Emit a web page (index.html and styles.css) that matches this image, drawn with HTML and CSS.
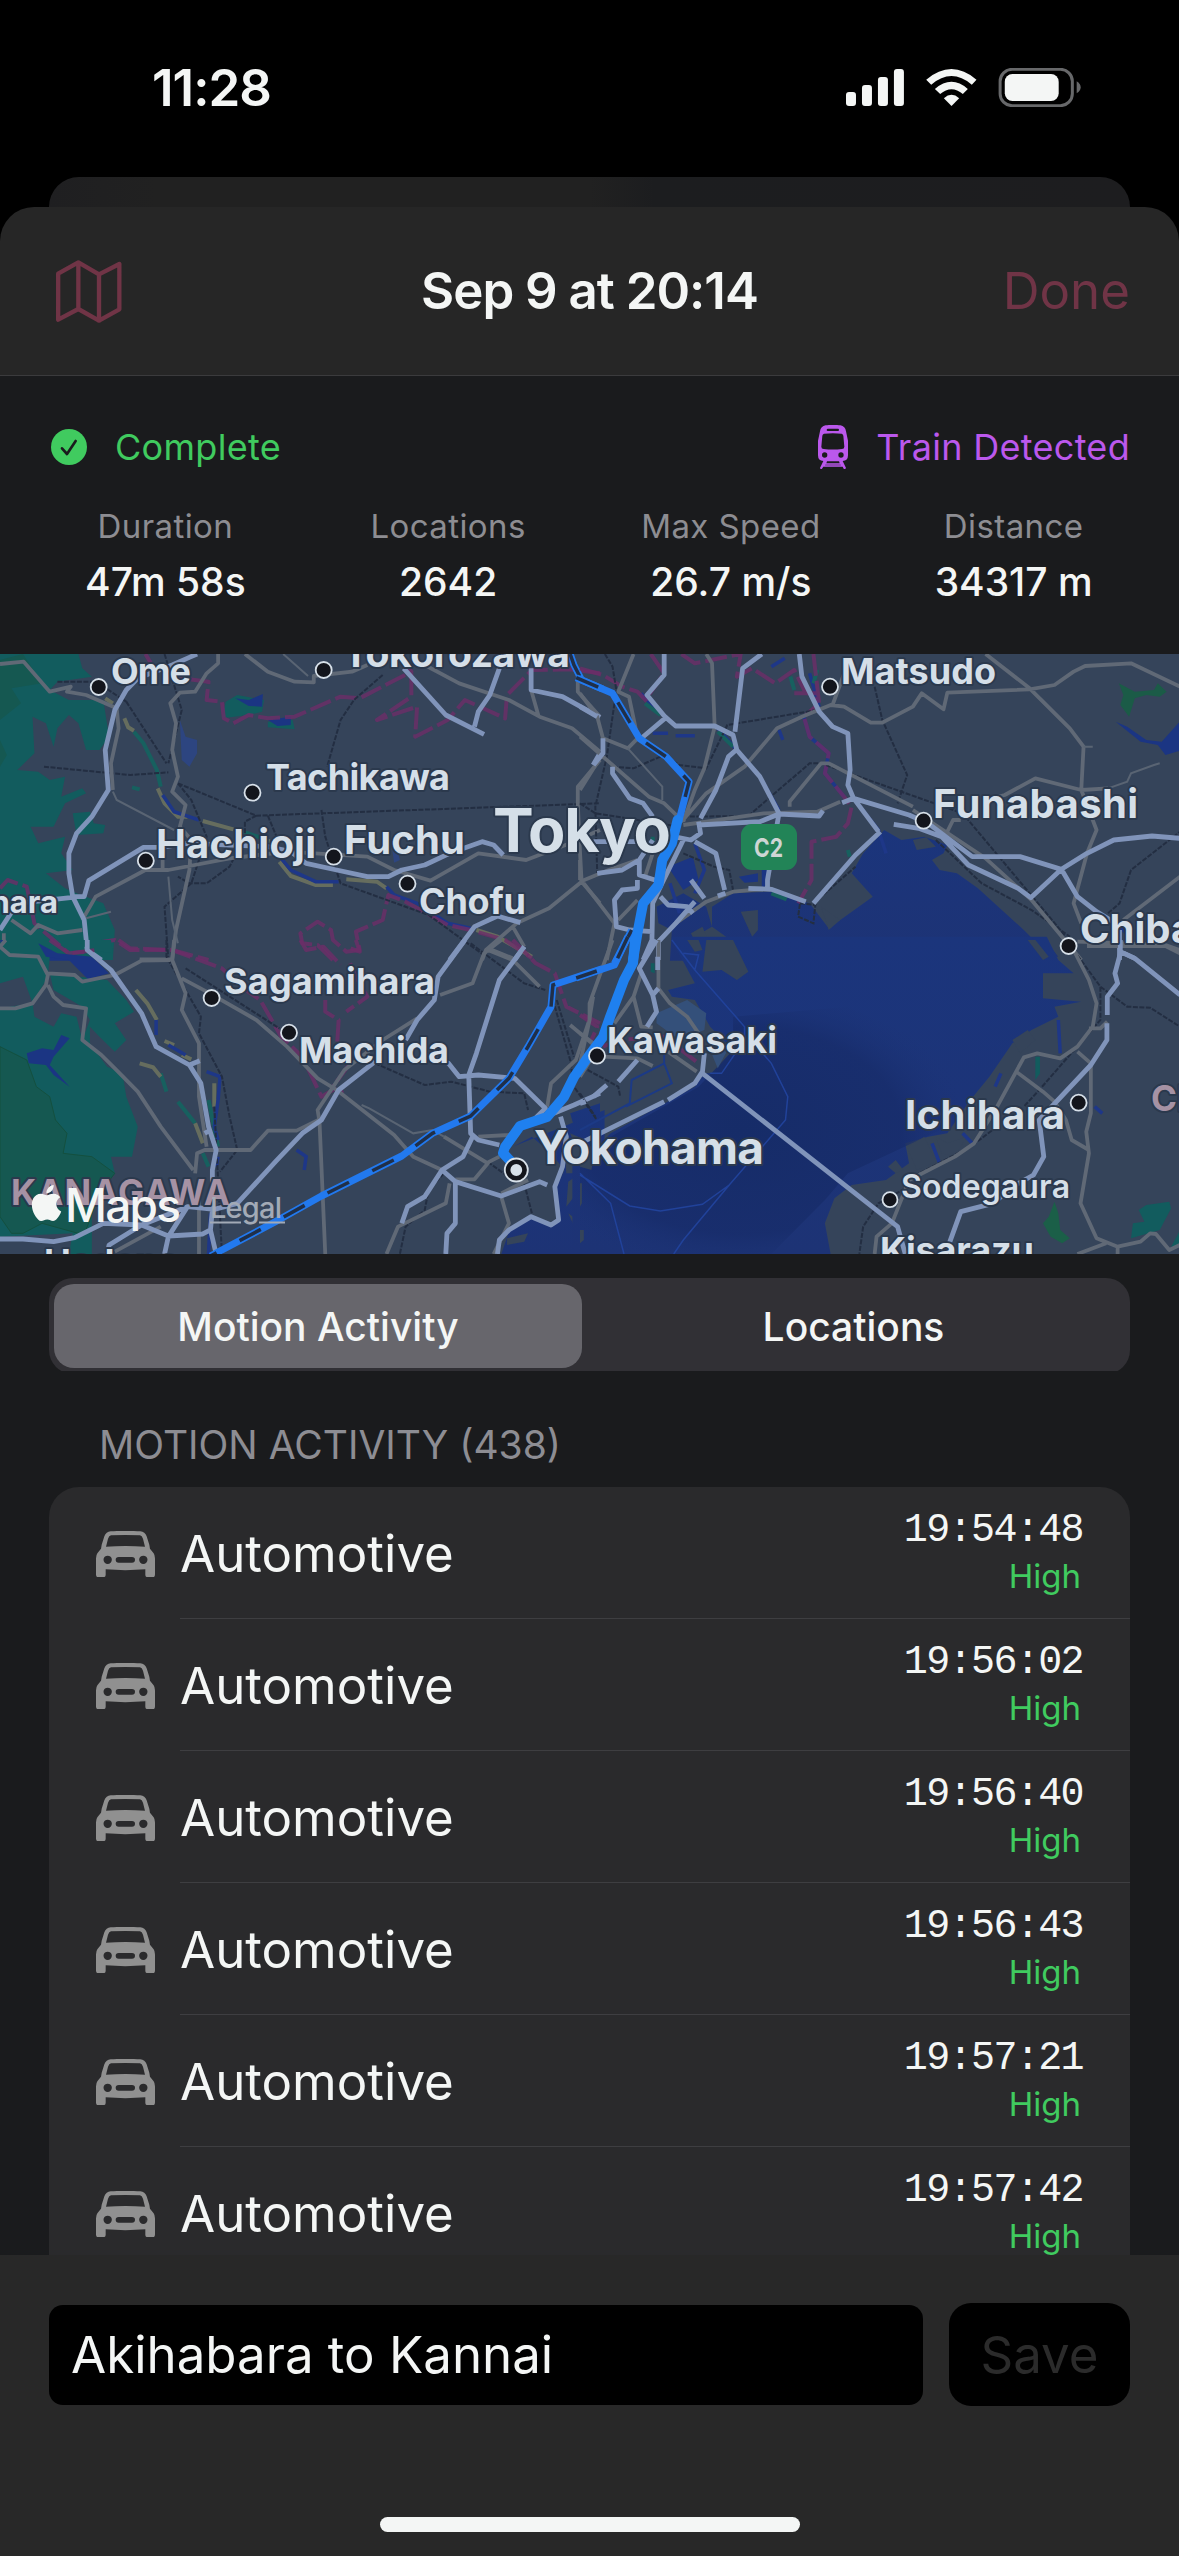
FILE: index.html
```html
<!DOCTYPE html>
<html lang="en">
<head>
<meta charset="utf-8">
<title>Sep 9 at 20:14</title>
<link rel="stylesheet" href="styles.css">
</head>
<body>
<svg class="defs" width="0" height="0" aria-hidden="true">
  <symbol id="car" viewBox="108 152 177 139">
    <path fill-rule="evenodd" d="M152 153Q196 150 241 153Q255 155 260 168L268 193L270 205L281 219Q285 225 285 234V283Q285 291 277 291H264Q256 291 256 283V267Q196 272 137 267V283Q137 291 129 291H116Q108 291 108 283V234Q108 225 112 219L123 205L125 193L133 168Q138 155 152 153ZM153 165Q147 166 144 175L138 199Q196 195 255 199L249 175Q246 166 240 165Q196 163 153 165ZM143 226A12.500 12.500 0 1 0 143 251A12.500 12.500 0 1 0 143 226ZM250 226A12.500 12.500 0 1 0 250 251A12.500 12.500 0 1 0 250 226ZM176 230Q167 230 167 238Q167 247 176 247H216Q225 247 225 238Q225 230 216 230Z"/>
  </symbol>
</svg>

<div class="status">
  <span class="clock">11:28</span>
  <svg class="status-icons" viewBox="48 54 706 118">
    <g fill="#f4f6f5">
      <rect x="48" y="126" width="30" height="42" rx="9"/><rect x="96" y="105" width="30" height="63" rx="9"/>
      <rect x="144" y="81" width="30" height="87" rx="9"/><rect x="192" y="57" width="30" height="111" rx="9"/>
      <path d="M289 89Q365 25 440 89L426 104Q365 52 304 104Z"/>
      <path d="M315 117Q365 74 414 117L399 132Q365 103 331 132Z"/>
      <path d="M342 145Q365 124 388 145L365 168Z"/>
      <rect x="525" y="72" width="162" height="81" rx="23"/>
    </g>
    <rect x="511" y="58" width="217" height="109" rx="36" fill="none" stroke="#67686a" stroke-width="9"/>
    <path fill="#67686a" d="M741 94Q753 101 753 112Q753 123 741 130Z"/>
  </svg>
</div>
<div class="sheet-behind"></div>

<main class="sheet">
  <header class="nav">
    <svg class="map-icon" viewBox="48 60 197 189"><path fill="none" stroke="#703446" stroke-width="13" stroke-linejoin="round" stroke-linecap="round" d="M54.500 101L115 67L177 103L238 72V208L177 242L115 207L54.500 239ZM115 67V207M177 103V242"/></svg>
    <h1>Sep 9 at 20:14</h1>
    <span class="done">Done</span>
  </header>

  <section class="details">
    <div class="badges">
      <div class="badge complete">
        <svg class="check" viewBox="33 563 108 108"><circle cx="87" cy="617" r="54" fill="#40cb5f"/><path d="M66 621L81 638L107 599" fill="none" stroke="#1a1b1d" stroke-width="8" stroke-linecap="round" stroke-linejoin="round"/></svg>
        <span>Complete</span>
      </div>
      <div class="badge train">
        <svg class="train-icon" viewBox="69 45 90 132"><path fill="#bb58ec" fill-rule="evenodd" d="M92 46Q114 43 136 46Q151 49 153 64L159 92V136Q159 153 143 153L153 174Q150 179 146 176L143 170H85L81 176Q77 179 75 174L85 153Q69 153 69 136V92L75 64Q77 49 92 46ZM98 56Q95 57 95 60Q95 63 98 63H129Q132 63 132 60Q132 56 129 56ZM87 71Q83 72 82 77L79 110Q79 117 86 117Q114 120 141 117Q148 117 148 110L145 77Q144 72 140 71Q114 68 87 71ZM89 127A8 8 0 1 0 89 143A8 8 0 1 0 89 127ZM138 127A8 8 0 1 0 138 143A8 8 0 1 0 138 127ZM96 154L94 160H134L132 154ZM91 164L90 166H138L137 164Z"/></svg>
        <span>Train Detected</span>
      </div>
    </div>
    <dl class="stats">
      <div><dt>Duration</dt><dd>47m 58s</dd></div>
      <div><dt>Locations</dt><dd>2642</dd></div>
      <div><dt>Max Speed</dt><dd>26.7 m/s</dd></div>
      <div><dt>Distance</dt><dd>34317 m</dd></div>
    </dl>
  </section>

  <svg class="map" viewBox="0 0 1179 600">
    <defs>
      <linearGradient id="bay" x1="0" y1="0" x2="0" y2="1"><stop offset="0" stop-color="#1b357c"/><stop offset="1" stop-color="#1d3375"/></linearGradient>
      <radialGradient id="deep" cx=".42" cy=".5" r=".6"><stop offset="0" stop-color="#162c68"/><stop offset=".7" stop-color="#172c6a" stop-opacity=".75"/><stop offset="1" stop-color="#1c3478" stop-opacity="0"/></radialGradient>
    </defs>
    <!-- north-west quarter -->
    <g transform="translate(0 -14) scale(.38265 .33333)">
      <path class="forest" d="M0 42H205L215 85 240 110 150 125 130 150 180 180 270 180 285 290 260 330 225 330 205 250 180 225 150 265 140 320 120 250 85 230 90 340 45 390 100 395 130 420 170 410 160 470 215 445 225 460 170 490 140 560 80 560 100 610 170 590 160 640 190 690 120 700 170 745 200 760 270 790 300 870 295 960H0ZM190 520L235 515 245 550 275 555 270 580 200 585ZM590 185L620 165 690 180 685 215 650 225 580 235ZM700 245L765 240 770 268 700 262Z"/>
      <path class="wood" d="M0 60L60 42 110 130 30 145 55 190 0 240ZM0 300L18 345 0 380Z"/>
      <path class="lake" d="M615 175L650 180 687 162 685 200 650 198ZM700 240L760 230 760 255 725 258ZM100 910L150 945 230 955 220 962H130Z"/>
      <path fill="#2d4580" d="M470 240L485 290 515 300 515 340 495 380 475 360ZM1025 630L1040 635 1045 660 1030 668Z"/>
      <path class="stream teal" d="M350 275L375 310 410 390 420 440M635 575L700 600M345 442L365 448"/>
      <path class="stream sand" d="M325 235L335 262 350 272M412 445L430 490 465 530 490 530M530 543L610 568M730 665L760 708 825 735 870 735M905 718L985 725 1010 745M1245 870L1300 890 1390 950M275 175L295 190M680 598L705 604"/>
      <path class="stream water" d="M425 465L455 515 520 540M735 655L760 690 825 725 885 725M1010 740L1030 765 1090 790 1170 850 1230 865"/>
      <path class="border" d="M380 42L400 80 440 110 545 125 540 180 580 185 585 235 610 250 650 225 700 235 770 230 890 170 940 175 1075 95 1060 65M1075 100V170L985 240 1090 200 1085 290 1170 240 1215 180 1320 235 1325 165 1390 90 1490 88 1568 100M0 745L20 720 70 740 90 850 180 940 230 935M245 910L300 900 340 930 450 930 545 960M870 960L830 915 790 910 785 880 830 845 865 870 870 900 905 935 940 930 930 875 1000 840 1015 765 1060 785 1170 855 1230 870 1320 900 1390 955"/>
      <path class="rail" d="M115 380L340 405 440 397M330 185L435 370M430 42L475 210 440 370M465 430L670 527 840 520 1568 490M465 430L500 480 540 590 500 730 430 800 440 960M1000 105L925 180 890 240 855 380M700 527L730 610M840 510L850 590 890 730 1120 825 1270 950M670 527L640 545 640 590 600 680 540 730 495 730 465 710M150 125H250L330 185"/>
      <path class="minor" d="M640 42L700 95 770 125 820 127 820 108 920 95 960 75M570 42V70L540 100 510 155 470 158 445 190 460 250 450 330 465 410 450 455 485 495 470 560 500 600 495 690 460 870 450 960M0 72L62 65 130 155 185 140 175 155 225 165 305 205 310 265 290 370 295 450M1110 75L1200 130 1330 180 1410 230 1495 265 1568 335M1388 150L1408 230M1510 85V155L1568 230M215 840L250 770 380 690 440 690 600 655 750 635 960 650 1030 690 1125 722 1250 640 1375 660 1490 610 1568 570M30 840L80 880 100 855 150 880 215 870M10 880V910L30 945 100 950M1568 360L1510 440V490L1515 620 1520 725 1568 790M1520 725L1435 805 1350 850 1270 930 1260 960M1340 860L1370 920M1275 925L1340 955M365 958H450M425 690V650"/>
      <path class="thin" d="M295 455L305 480 455 570M440 710L450 840 465 910M225 835L290 815M740 42L805 108"/>
      <path class="major" d="M515 42L495 52 450 75 360 115 330 150 300 210 275 330 283 450 240 530 200 580 180 640 180 700 190 770 220 840 228 930 265 960M190 770L220 770 232 722 375 622 420 622 490 610 700 620 760 635 800 670 880 690 960 710 1015 710 1050 690 1110 675 1175 640 1260 605 1290 615 1315 645M1055 85L1165 225 1265 283M1305 85L1280 165 1250 215 1240 260M1388 85V150L1470 170 1568 232M1175 960L1240 860 1300 828 1360 848M1370 920L1345 960M1568 340L1550 375M0 870L45 790 190 772"/>
      <path class="train-line" d="M1490 42L1500 75 1520 120 1575 147"/><path class="train-dash" d="M1490 42L1500 75 1520 120 1575 147"/>
    </g>
    <!-- north-east quarter -->
    <g transform="translate(580 -14) scale(.38265 .33333)">
      <path fill="url(#bay)" d="M795 570L840 600 900 590 960 615 950 640 920 660 940 690 985 700 1040 745 1160 870 1240 962H425L400 905 345 860 345 800 400 760 500 755 600 790 650 865 765 770 710 700 740 640ZM200 800L270 760 330 800 345 860 300 890 350 962H235L240 870 205 850ZM1190 900L1210 890 1250 950H1215Z"/>
      <path class="lake" d="M1400 245L1430 260 1480 300 1520 305 1575 235V330L1530 345 1510 315 1465 305ZM415 710L465 700 465 725 430 728ZM475 690H495V740H475ZM230 680L295 650 310 720 270 750Z"/>
      <path class="land" d="M420 815L465 810 465 870 450 890ZM290 880L320 860 335 900 310 930ZM365 930L400 905 415 940 370 962ZM870 600L905 592 930 620 880 630ZM630 800L680 840 650 870Z"/>
      <path class="stream water" d="M500 80L535 55M190 280H230M250 287H300M520 270L530 300M360 265L410 330 470 410 520 510M160 160L200 215M725 490L780 570 800 640M300 610L325 690 300 760M235 730L260 820M600 100L625 200M585 230L600 290 650 340 640 400 690 470M1400 840L1440 900"/>
      <path class="stream teal" d="M550 110L560 150M620 90L610 130M170 190L210 225M360 275L400 320M700 630L705 650M500 760L540 778M190 590V605"/>
      <path fill="#1b5b47" d="M1408 130L1450 155 1500 150 1510 130 1533 155 1515 170 1480 165 1450 175 1435 230 1412 195 1420 165Z"/>
      <path class="border" d="M0 85L60 105 110 140 150 155 175 185M185 42L220 100 180 165M265 42L300 70 420 42 410 110 450 85 510 130 560 90 590 160M560 160H620L615 200 585 230 600 290 650 340 640 400 690 470 710 500 700 550 670 590 605 605 605 720 570 790M610 42L625 190"/>
      <path class="rail" d="M65 42L85 80 95 150 70 350 40 500 45 700M85 380L140 385 220 345 260 375 330 385 385 255 620 210M770 140L790 240 855 405 830 490M270 530L440 528 600 370 630 370 1000 520 1270 890M930 600L1050 730 1180 810 1280 890M1380 820L1410 790 1440 690 1568 575M270 640L350 680 390 690 400 750M575 790L615 795 610 850 570 830ZM0 490L40 520 260 560M610 790L720 680"/>
      <path class="minor" d="M140 42L100 155 128 170 150 290M0 290L180 470 220 490 265 540M330 42L345 70 352 260 325 385 300 450 270 545M0 450L60 340M60 295L125 325 155 290M700 70L660 195M270 555L480 520 620 515 680 485M548 500V485L630 370 650 370 870 500M265 545L330 460 430 380 515 265 580 230 655 195 690 200 760 248H790L870 200 893 160 950 208 960 158 1175 148 1240 135 1290 95 1320 78 1440 70 1568 140M1060 42L1175 145 1280 265 1316 320 1310 450 1350 570 1325 640 1290 790 1310 850M1060 480L1110 465 1190 415 1310 450 1380 445M870 510L1060 655 1180 780 1310 960M960 575L975 540 995 540M1420 840L1568 710M1300 905L1530 915 1568 930M0 725L75 690 150 660M0 720V660M10 730L90 850 70 960M150 780L100 840M170 710L190 640 250 590M0 160L45 230 60 295M150 880L130 960M200 910L250 850 330 785 400 755 500 745"/>
      <path class="thin" d="M1380 445L1430 425 1440 400 1500 375 1515 370M1316 320H1340M125 325L215 440V480"/>
      <path class="major" d="M220 42V105L175 165 222 230 250 258H352L400 285 410 330 470 410 520 520 490 720V745M475 42L425 85 405 275M408 330L388 350 355 450 315 535M222 235L155 300M573 42L580 110 625 215 660 260 700 280 706 390 700 435 715 475 860 525 910 550 1025 650H1150L1258 688 1325 640 1395 600 1495 588 1568 595M310 555L470 545 520 522 625 528 635 512M685 488L715 475 780 575M820 553L885 565 945 590 1015 675 1145 745 1178 773 1258 688 1300 770 1350 815 1400 850M785 575L720 645 610 790M590 785L500 748 440 745M380 760L360 768M300 785L250 850 205 905V960M300 605L355 640 378 750M290 720L325 775M245 590L290 600 315 580 310 545M0 200L45 230M60 295V340L35 375M85 380V400L130 475 165 490 190 530M45 700L110 690 155 660 190 600M155 660V705L210 725M270 600L210 740 190 790 188 900 165 960M210 770L230 795 280 800 295 820M150 720V745L110 750 90 780 95 860 130 870 188 875M35 605H150M1410 870V960M1412 935L1450 955"/>
      <path class="train-line" d="M-10 113L85 160 155 295 225 350 285 425 258 545M135 870L90 970"/><path class="train-dash" d="M-10 113L85 160 155 295 225 350 285 425 258 545M135 870L90 970"/>
      <path class="track" d="M255 540L240 610 215 660 205 735 165 790 150 880 138 965"/>
    </g>
    <!-- south-west quarter -->
    <g transform="translate(0 286) scale(.38265 .33333)">
      <path class="forest" d="M0 0H100L130 50 125 110 85 190 90 230 140 260 160 220 200 230 215 300 235 240 215 200 140 150 130 100 280 120 330 180 350 215 300 250 330 300 300 335 260 290 235 260 235 310 280 380 320 400 330 470 360 560 345 650 290 650 300 700 240 800 240 942H180L190 880 0 890V205L85 190 60 110 0 130ZM200 0H290L295 40 230 30Z"/>
      <path class="wood" stroke="#14503f" d="M0 320L70 360 95 440 130 470 145 540 175 580 165 640 240 650 300 700 260 760 220 885 110 850 60 880H30L0 830Z"/>
      <path class="lake" d="M100 10L150 40 240 50 285 100 230 118 180 60 120 50ZM70 340L110 325 140 330 160 285 182 295 140 350 130 375 182 440 140 405 120 375 75 370ZM0 0H10L5 20Z"/>
      <path fill="url(#bay)" d="M1568 490L1490 520 1500 560 1568 540ZM1340 620L1390 590 1440 640 1475 690 1455 740 1465 840 1440 858 1388 832 1330 875 1310 942H1580V700H1480L1470 560 1500 620 1580 640V510"/>
      <path class="land" d="M1485 725L1510 705 1500 770 1480 800ZM1485 820L1520 850 1525 900 1500 930 1505 870ZM1540 700L1580 690V720L1545 735ZM1325 895L1380 880 1370 905 1325 915ZM1490 580L1530 600 1510 640Z"/>
      <path class="stream teal" d="M420 400L435 455M465 485L510 550M530 640L545 680M545 480L570 620"/>
      <path class="stream sand" d="M355 150L385 190 410 240M430 303L455 315M365 370L400 382 420 410M510 550L530 610M560 430V500M475 345L500 358"/>
      <path class="stream water" d="M408 240V285M440 315L485 345M540 395L575 410 570 480 560 560 570 600M570 650L565 680M550 820L545 942M775 630L800 650 795 690"/>
      <path class="border" d="M130 0L180 40 250 30M310 0L340 25 450 30 580 85 630 140 680 180 735 290 790 350 840 470 885 440 895 460M785 0L800 30 845 20 890 75M930 0L940 35 905 20M915 70L930 110 960 170 905 215M850 180V215L885 240 880 330M915 370L870 440M1340 0L1400 70 1450 100 1480 200 1568 250"/>
      <path class="rail" d="M435 0V50L525 230 520 280 580 410 600 530 620 630 575 695M485 85L730 265M980 370L1110 435 1180 425 1280 455 1370 460 1380 510M1230 10L1370 130 1425 150M1445 180L1490 360 1500 440 1560 540M1340 720L1280 670M1160 700L1120 750 1110 810 1060 860 1045 942M1370 730L1390 820M560 500L580 942M1455 180L1500 350"/>
      <path class="minor" d="M15 0L0 20 25 45 100 50 125 105 120 135 85 190 40 205H0M125 100L195 105 215 125 300 105 370 62 445 60M125 135L140 170 165 195 225 205 215 300 265 345 300 385 360 455 420 560 505 690M455 0L450 60 485 160 475 210 520 310 520 470 540 620M475 115L540 155 670 240 750 320 830 415 880 450 930 495 1030 585 1080 650 1155 690M1310 0L1265 40 1235 130 1150 165M1275 30L1340 60 1410 140M1090 235L1000 300 900 390 830 510 835 545 850 942M520 942V780M510 700L515 640 535 630H655L700 572H775L840 535M1310 770L1330 850 1290 942M1175 730L1165 790 1040 860 1010 942M1250 590L1330 585 1370 560M1160 590L1275 670 1240 718 1190 718M1550 170L1540 240 1505 360 1440 430 1430 500M1490 255L1568 330M420 860L300 935M1310 760L1380 720M1270 670L1305 650"/>
      <path class="thin" d="M945 495L965 505 1080 580 1130 570 1160 590"/>
      <path class="major" d="M228 0V30L290 90 370 220 408 320 495 375 525 430 545 560 565 630 555 690 555 810 550 870 565 942M495 375L522 362M535 580L550 570M1215 0L1145 110 1135 180 1090 240 1060 300M980 365L885 450 840 540 790 580 720 665 620 790 560 808 490 800 440 890 430 942M0 897H60L140 905 195 893 270 850 370 855 440 888 530 882 550 870M370 855L285 915 280 942M370 855L490 800M1370 20L1305 120 1245 340 1225 405 1230 580 1250 600 1305 615M1100 340L1172 370 1200 410 1250 405 1345 415 1425 505 1390 545M1425 530L1500 495 1568 460M1235 590L1210 650 1155 690 1110 770 1065 800 1050 850M1155 690L1190 725 1310 768 1410 725 1430 735M1190 725V850L1168 880 1165 942M1465 530L1480 590 1470 680 1450 740 1460 840 1440 855 1388 830 1330 870 1305 900 1300 942"/>
      <path class="train-line" d="M1575 86L1445 135 1440 200 1380 320 1330 415 1230 528 1130 580 1050 648 840 768 720 845 550 948"/><path class="train-dash" d="M1575 86L1445 135 1440 200 1380 320 1330 415 1230 528 1130 580 1050 648 840 768 720 845 550 948"/>
    </g>
    <!-- south-east quarter -->
    <g transform="translate(580 286) scale(.38265 .33333)">
      <path fill="url(#bay)" d="M240 0L300 130 230 150 240 170 300 180 340 260 400 330 350 400 325 400 300 440 80 580 30 640 -20 660V942H655L640 850 665 775 710 735 800 720 860 670 850 610 910 590 960 580 1020 480 1070 410 1130 310 1180 270 1250 230 1240 200 1310 185 1210 175V100L1290 100 1250 60 1220 -10H240Z"/>
      <path fill="url(#deep)" d="M400 230L700 200 950 330 1000 450 960 560 700 700 640 780 500 942H0V660L80 590 310 440 400 330Z"/>
      <path class="land" d="M330 0H400L440 95 410 120 370 90 320 95ZM280 0H310L320 30 300 35ZM1130 300L1170 270 1190 300 1150 340ZM930 590L960 610 1010 590 980 650 945 640ZM1170 0H1190L1225 50 1210 60ZM855 620L900 590 930 665 880 690ZM805 680L825 660 845 690 825 700ZM0 640L40 610 30 690 0 680ZM0 730H5V790L0 800ZM0 870H10V900L0 910Z"/>
      <path fill="#34507a" d="M200 220L280 180 330 220 325 270 260 300 200 250ZM340 330L400 300 360 385Z"/>
      <path fill="none" stroke="#1c3a86" stroke-width="2" d="M0 570L130 490 135 420 220 370 240 430 120 500M220 370V330"/>
      <path fill="none" stroke="#21429a" stroke-width="1.500" d="M240 0L300 90 430 260V300L370 400H340M470 330L500 370 543 470 537 540 390 735 320 793 210 813 130 798 0 705M390 735L270 900 245 942M0 700L80 790 115 942M270 40L310 45 300 90"/>
      <path class="stream water" d="M1250 240L1255 340M1100 400L1085 440M1000 580L1025 610M920 610L940 670M1345 500L1365 520"/>
      <path fill="#1b5f48" d="M1240 785L1225 830 1210 850 1230 890 1260 910 1280 895 1255 870 1250 820Z"/>
      <path class="forest" d="M1480 795L1540 785 1545 805 1515 870 1440 895 1445 850 1475 845 1460 810ZM1190 350H1202V400L1190 420ZM1568 870V920H1545ZM185 70H195V100L185 95Z"/>
      <path class="border" d="M0 225L45 260 30 300M60 320L100 300 220 290 310 370"/>
      <path class="rail" d="M1290 30L1360 140 1430 200 1490 203 1568 260M1360 140V240L1200 450 1160 500M1090 560L1020 620 870 710M850 745L780 790 740 860 730 942M20 390L100 440 105 470M0 460L40 530"/>
      <path class="minor" d="M85 0L25 190V240L0 370M160 100L140 170 90 250M140 170L160 260 190 262M205 145L235 190 280 230 310 280M230 335L305 395M60 350L150 355 190 378M0 280L35 310M60 300L0 410M1290 30L1330 120 1350 190 1340 260 1300 320 1255 355 1195 340 1160 352 1090 500 1030 610 980 650 860 720 815 850 775 890 770 942M1140 395L1210 455 1240 485 1270 540 1285 600 1330 630M1300 335L1335 370V520L1323 575 1330 640 1308 790 1350 895 1405 920 1465 905 1490 880 1505 882 1540 930 1568 915M1375 910L1300 942M1405 920V942M1330 265H1360L1378 245M1325 18H1530L1568 40M205 0V150"/>
      <path class="major" d="M200 0L155 85 190 165 200 215 175 260M203 50V90M190 165L205 145M150 360L100 425M70 435L35 470M15 485L0 490M325 340L320 395 300 430 230 480M220 485L0 610M320 400L780 815 830 860 850 942M1412 0V40L1398 100 1405 130 1378 170V225M1377 250V300L1335 375 1200 540 1212 650 1185 705 1130 740 1080 790 995 815 965 910M1412 35L1450 55 1568 165"/>
      <path class="train-line" d="M125 -10L90 75 -10 114"/><path class="train-dash" d="M125 -10L90 75 -10 114"/>
    </g>
    <path class="track" d="M635 286L633 309 624 326 610 363 603 383 588 403 574 423 564 443 547 463 520 472 505 493 503 499 515 512"/>

    <g class="pins">
      <circle cx="98.700" cy="33" r="8"/><circle cx="323.700" cy="16" r="8"/><circle cx="252.500" cy="138.700" r="8"/><circle cx="145.800" cy="206.700" r="8"/><circle cx="333.700" cy="202.700" r="8"/><circle cx="407.500" cy="229.700" r="8"/><circle cx="830" cy="32.700" r="8"/><circle cx="923.600" cy="166.700" r="8"/><circle cx="1068.600" cy="292" r="8"/><circle cx="211.600" cy="344" r="8"/><circle cx="289" cy="378.700" r="8"/><circle cx="597" cy="401.700" r="8"/><circle cx="1078.600" cy="448.700" r="8"/><circle cx="890" cy="545.700" r="7.500"/>
      <circle cx="516.300" cy="516" r="11.500"/><circle cx="516.300" cy="516" r="5" class="pin-core"/>
    </g>
    <rect x="741" y="170" width="56" height="46" rx="11" fill="#228457"/>
    <text class="shield" x="754" y="203" textLength="29" lengthAdjust="spacingAndGlyphs">C2</text>
    <g class="places">
      <text x="111" y="30" textLength="80">Ome</text>
      <text x="343" y="13" font-size="39" textLength="227">Tokorozawa</text>
      <text x="266" y="136" textLength="184">Tachikawa</text>
      <text x="156" y="204" font-size="40" textLength="160">Hachioji</text>
      <text x="344" y="200" font-size="40" textLength="121">Fuchu</text>
      <text x="419" y="260" textLength="107">Chofu</text>
      <text x="58" y="259" font-size="31" text-anchor="end">Uenohara</text>
      <text x="493" y="198" font-size="61" textLength="178">Tokyo</text>
      <text x="841" y="30" textLength="155">Matsudo</text>
      <text x="933" y="164" font-size="40" textLength="205">Funabashi</text>
      <text x="1080" y="289" font-size="40">Chiba</text>
      <text x="224" y="340" textLength="211">Sagamihara</text>
      <text x="299" y="409" textLength="150">Machida</text>
      <text x="607" y="399" textLength="170">Kawasaki</text>
      <text x="534" y="510" font-size="46" textLength="230">Yokohama</text>
      <text x="905" y="475" font-size="40" textLength="160">Ichihara</text>
      <text x="901" y="544" font-size="32" class="semi" textLength="169">Sodegaura</text>
      <text x="880" y="609" textLength="154">Kisarazu</text>
      <text x="44" y="621" font-size="36">Hadano</text>
      <text class="region" x="11" y="551" textLength="219">KANAGAWA</text>
      <text class="region" x="1151" y="457">CHIBA</text>
    </g>
    <path fill="#f4f6f5" transform="translate(28.500 531) scale(1.500)" d="M12.152 6.896c-.948 0-2.415-1.078-3.960-1.040-2.040.027-3.910 1.183-4.961 3.014-2.117 3.675-.546 9.103 1.519 12.090 1.013 1.454 2.208 3.090 3.792 3.039 1.520-.065 2.090-.987 3.935-.987 1.831 0 2.350.987 3.960.948 1.637-.026 2.676-1.480 3.676-2.948 1.156-1.688 1.636-3.325 1.662-3.415-.039-.013-3.182-1.221-3.220-4.857-.026-3.040 2.480-4.494 2.597-4.559-1.429-2.090-3.623-2.324-4.390-2.376-2-.156-3.675 1.090-4.610 1.090zM15.530 3.830c.843-1.012 1.400-2.427 1.245-3.830-1.207.052-2.662.805-3.532 1.818-.780.896-1.454 2.338-1.273 3.714 1.338.104 2.715-.688 3.559-1.701"/>
    <text class="brand" x="65" y="568" textLength="116">Maps</text>
    <text class="legal" x="210" y="564" textLength="72">Legal</text>
    <path d="M210 568.500H241M259 568.500H285" stroke="#a2aab6" stroke-width="2"/>
  </svg>

  <section class="activity">
    <div class="segment-clip">
      <div class="segments">
        <span class="segment selected">Motion Activity</span>
        <span class="segment">Locations</span>
      </div>
    </div>
    <h2>MOTION ACTIVITY (438)</h2>
    <ul class="list">
      <li><svg class="car"><use href="#car"/></svg><div class="row"><span class="kind">Automotive</span><div class="meta"><time>19:54:48</time><span>High</span></div></div></li>
      <li><svg class="car"><use href="#car"/></svg><div class="row"><span class="kind">Automotive</span><div class="meta"><time>19:56:02</time><span>High</span></div></div></li>
      <li><svg class="car"><use href="#car"/></svg><div class="row"><span class="kind">Automotive</span><div class="meta"><time>19:56:40</time><span>High</span></div></div></li>
      <li><svg class="car"><use href="#car"/></svg><div class="row"><span class="kind">Automotive</span><div class="meta"><time>19:56:43</time><span>High</span></div></div></li>
      <li><svg class="car"><use href="#car"/></svg><div class="row"><span class="kind">Automotive</span><div class="meta"><time>19:57:21</time><span>High</span></div></div></li>
      <li><svg class="car"><use href="#car"/></svg><div class="row"><span class="kind">Automotive</span><div class="meta"><time>19:57:42</time><span>High</span></div></div></li>
    </ul>
  </section>

  <footer class="toolbar">
    <div class="form">
      <div class="field">Akihabara to Kannai</div>
      <div class="save">Save</div>
    </div>
    <div class="home"></div>
  </footer>
</main>
</body>
</html>
```

FILE: styles.css
```css
* { box-sizing: border-box; margin: 0; padding: 0; }
html { background: #000; }
body {
  width: 1179px; height: 2556px; overflow: hidden;
  display: flex; flex-direction: column;
  background: #000; color: #f4f6f5;
  font-family: Inter, "Liberation Sans", sans-serif;
}
svg { display: block; }
.defs { display: none; }

.status { height: 177px; padding: 0 98px 2px 152px; display: flex; align-items: center; justify-content: space-between; flex: none; }
.clock { font-size: 51px; font-weight: 600; letter-spacing: -1px; }
.status-icons { width: 235px; height: 39.300px; }
.sheet-behind { flex: none; height: 30px; margin: 0 49px; border-radius: 30px 30px 0 0; background: linear-gradient(90deg, #1f1f21, #212121 10%, #212121 50%, #1c1d1f 56%, #1d1d1f); }

.sheet { flex: 1; min-height: 0; display: flex; flex-direction: column; background: linear-gradient(#000 0 60px, #1a1b1d 60px); }
.nav {
  flex: none; height: 169px; padding: 0 49px 0 56px;
  display: grid; grid-template-columns: 1fr auto 1fr; align-items: center;
  background: #262626; border-bottom: 1px solid #3b3b3d; border-radius: 34px 34px 0 0;
}
.map-icon { width: 65.700px; height: 63px; }
h1 { font-size: 51px; font-weight: 600; letter-spacing: -1px; line-height: 60px; margin-left: 7px; margin-right: 14px; }
.done { justify-self: end; font-size: 51px; color: #703446; line-height: 60px; }

.details { flex: none; height: 278px; padding-top: 49px; }
.badges { display: flex; justify-content: space-between; padding: 0 49px 0 51px; height: 44px; }
.badge { display: flex; align-items: center; font-size: 36px; line-height: 44px; letter-spacing: .3px; }
.complete { gap: 28px; color: #40cb5f; }
.train { gap: 28px; color: #bb58ec; }
.check { width: 36px; height: 36px; }
.train-icon { width: 30px; height: 44px; }
.stats { display: grid; grid-template-columns: repeat(4, 1fr); padding: 0 24px; margin-top: 37px; text-align: center; }
dt { font-size: 33px; line-height: 40px; color: #8d8d92; letter-spacing: .4px; }
dd { font-size: 39px; line-height: 48px; font-weight: 500; margin-top: 12px; }

.map { flex: none; width: 1179px; height: 600px; background: #35445a; overflow: hidden; }
.map path { vector-effect: non-scaling-stroke; }
.forest { fill: #125c5e; }
.wood { fill: #155851; }
.lake { fill: #1b3583; }
.land { fill: #35445a; }
.stream { fill: none; stroke-width: 4; }
.stream.teal { stroke: #17605f; }
.stream.sand { stroke: #666d5e; }
.stream.water { stroke: #1e3788; stroke-width: 3.500; }
.border { fill: none; stroke: #6c2e68; stroke-width: 4; stroke-dasharray: 22 5; stroke-linejoin: round; opacity: .8; }
.rail { fill: none; stroke: #232e42; stroke-width: 2; stroke-dasharray: 5 1.500; }
.minor { fill: none; stroke: #606976; stroke-width: 3.800; stroke-linejoin: round; }
.thin { fill: none; stroke: #596473; stroke-width: 2; }
.major { fill: none; stroke: #8094ba; stroke-width: 4.800; stroke-linejoin: round; }
.train-line { fill: none; stroke: #2279ee; stroke-width: 7; stroke-linejoin: round; }
.train-dash { fill: none; stroke: #202f48; stroke-width: 3.500; stroke-dasharray: 24 26; }
.track { fill: none; stroke: #1f80ef; stroke-width: 10; stroke-linejoin: round; stroke-linecap: round; }
.pins circle { fill: #13151c; stroke: #d7e0e9; stroke-width: 1.800; }
.pins .pin-core { fill: #d7e0e9; }
.places text { font-family: Inter, sans-serif; font-weight: 700; fill: #d5dfe8; paint-order: stroke; stroke: #2b394d; stroke-width: 4px; stroke-linejoin: round; }
.places { font-size: 36px; }
.places .semi { font-weight: 600; }
.places .region { fill: #a692a4; font-size: 35px; }
.shield { font-size: 26px; font-weight: 700; fill: #ced5d4; }
.brand { font-size: 46px; font-weight: 500; fill: #f4f6f5; }
.legal { font-size: 29px; font-weight: 500; fill: #a2aab6; }

.activity { flex: 1; min-height: 0; overflow: hidden; padding: 24px 49px 0; }
.segment-clip { height: 93px; overflow: hidden; }
.segments { height: 96px; padding: 6px 5px; display: grid; grid-template-columns: 528px 1fr; background: #313035; border-radius: 24px; }
.segment { display: flex; align-items: center; justify-content: center; font-size: 39px; font-weight: 500; border-radius: 20px; }
.selected { background: #67666c; }
h2 { margin: 50px 0 18px 50px; font-size: 39px; line-height: 48px; font-weight: 400; color: #8d8d93; }
.list { list-style: none; background: #2a2a2c; border-radius: 30px 30px 0 0; }
li { height: 132px; display: flex; align-items: center; padding-left: 47px; }
.car { width: 59px; height: 46.300px; fill: #909090; margin-right: 25px; margin-top: 2px; }
.row { flex: 1; height: 132px; display: flex; align-items: center; justify-content: space-between; padding-right: 49px; border-bottom: 1px solid #3e3e41; }
.kind { font-size: 51px; line-height: 60px; margin-top: 2px; }
.meta { display: flex; flex-direction: column; align-items: flex-end; gap: 3px; }
time { font-family: "Liberation Mono", monospace; font-size: 40px; line-height: 44px; letter-spacing: -1.600px; margin-right: -2px; }
.meta span { font-size: 33px; line-height: 40px; color: #40cb5f; }

.toolbar { flex: none; height: 301px; background: #282828; padding: 48px 49px 0; }
.form { display: flex; align-items: center; gap: 26px; height: 103px; }
.field { flex: 1; height: 100px; line-height: 99px; padding-left: 22px; background: #000; border-radius: 14px; font-size: 51px; }
.save { width: 181px; height: 103px; line-height: 103px; border-radius: 22px; background: #000; color: #2b2b2b; font-size: 51px; text-align: center; }
.home { width: 420px; height: 15px; border-radius: 8px; background: #f4f6f5; margin: 111px auto 0; }
```
